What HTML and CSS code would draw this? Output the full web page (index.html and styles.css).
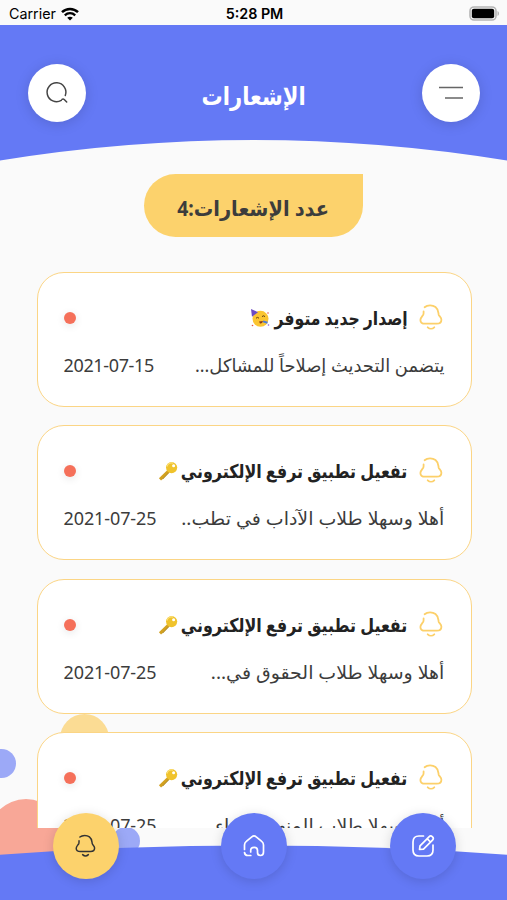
FILE: index.html
```html
<!DOCTYPE html>
<html lang="ar" dir="rtl">
<head>
    <meta charset="UTF-8">
    <meta name="viewport" content="width=device-width, initial-scale=1.0">
    <title>الإشعارات</title>
    <link rel="stylesheet" href="styles.css">
</head>
<body>

<svg class="sprite" aria-hidden="true">
    <symbol id="bell" viewBox="0 0 24 28">
        <path d="M5.6 3.2C8.500.7 13.500.7 16.500 3c3 2.300 2.700 5.200 3.200 7.700.4 1.600 2.700 2.500 2.700 5 0 2.700-2.100 4-4.600 4H6.200c-2.700 0-4.800-1.300-4.800-3.800 0-2.200 2.200-3.600 2.900-5.200.4-1 .3-2.100.3-3.200M8.700 23.300c1.900 1.800 4.700 1.800 6.600 0"/>
    </symbol>
    <symbol id="party" viewBox="0 0 20 20">
        <circle cx="10.5" cy="10.8" r="8" fill="#fbc531"/>
        <path d="M1 1l7 3.2-6 4.6z" fill="#6b4bc4"/>
        <path d="M6 10.2q1.5-1.6 3 0M12 8.6q1.5-1.6 3 0" fill="none" stroke="#5c3b12" stroke-width="1"/>
        <path d="M9 13.5l4-.6q-1 3.3-3 2.6z" fill="#8a3a1c"/>
        <path d="M13 13.4l4.5 1.4" stroke="#4d7bd8" stroke-width="2"/>
        <circle cx="2.5" cy="17.5" r=".8" fill="#e5534b"/>
        <circle cx="18" cy="5" r=".8" fill="#e5534b"/>
        <circle cx="18.5" cy="17" r=".8" fill="#8a5bd0"/>
    </symbol>
    <symbol id="key" viewBox="0 0 20 20">
        <path d="M10.5 10L2 18.4" stroke="#d3a11f" stroke-width="3"/>
        <path d="M4.500 18.200L11 11.500" stroke="#a98116" stroke-width="1"/>
        <circle cx="13.6" cy="6.6" r="5.6" fill="#f0c32c"/>
        <path d="M9 5.5a5 5 0 0 1 6-3.4" fill="none" stroke="#fbe07a" stroke-width="1.2"/>
        <circle cx="15.6" cy="4.8" r="1.5" fill="#fff"/>
    </symbol>
</svg>

<div class="screen">
    <div class="blob blob-yellow"></div>
    <div class="blob blob-blue"></div>
    <div class="blob blob-red"></div>
    <div class="blob blob-small"></div>

    <div class="status-bar" dir="ltr">
        <div class="carrier">
            <span>Carrier</span>
            <svg width="18" height="14" viewBox="0 0 18 14">
                <path d="M1 5.2C5.5.9 12.5.9 17 5.2" fill="none" stroke="#000" stroke-width="2.5"/>
                <path d="M3.8 8.3c3-2.8 7.400-2.8 10.400 0" fill="none" stroke="#000" stroke-width="2.3"/>
                <path d="M9 13.6L6.200 10.700c1.600-1.400 4-1.400 5.600 0z"/>
            </svg>
        </div>
        <div class="time">5:28 PM</div>
        <svg class="battery" width="31" height="15" viewBox="0 0 31 15">
            <rect x="1" y="1" width="26" height="13" rx="4" fill="#fafafa" stroke="#b5b5b5" stroke-width="1.6"/>
            <rect x="2.8" y="2.8" width="22.4" height="9.4" rx="2"/>
            <path d="M28.5 5c2 .7 2 4.300 0 5z" fill="#b5b5b5"/>
        </svg>
    </div>

    <header class="header">
        <svg class="header-bg" viewBox="0 0 507 136" preserveAspectRatio="none">
            <path d="M0 0H507V135.5Q253.5 94.5 0 135.5z"/>
        </svg>
        <button class="round-btn">
            <svg width="26" height="16" viewBox="0 0 26 16">
                <path d="M1 2.500h24M7 13h18" fill="none" stroke="#666" stroke-width="1.3"/>
            </svg>
        </button>
        <h1><span class="fit">الإشعارات</span></h1>
        <button class="round-btn">
            <svg width="24" height="24" viewBox="0 0 24 24">
                <path d="M16.300 19.300A9.400 9.400 0 1 1 20.300 14.500M17 18.300q1.200-.8 2.200.2l2.500 2.500" fill="none" stroke="#444" stroke-width="1.5" stroke-linecap="round"/>
            </svg>
        </button>
    </header>

    <div class="count"><span class="fit">عدد الإشعارات:4</span></div>

    <main class="list">
        <article class="card release">
            <div class="card-top">
                <svg class="bell"><use href="#bell"/></svg>
                <h2><span class="fit">إصدار جديد متوفر</span></h2>
                <svg class="emoji"><use href="#party"/></svg>
                <span class="dot"></span>
            </div>
            <div class="card-bottom">
                <p><span class="fit">يتضمن التحديث إصلاحاً للمشاكل...</span></p>
                <time dir="ltr">2021-07-15</time>
            </div>
        </article>
        <article class="card">
            <div class="card-top">
                <svg class="bell"><use href="#bell"/></svg>
                <h2><span class="fit">تفعيل تطبيق ترفع الإلكتروني</span></h2>
                <svg class="emoji"><use href="#key"/></svg>
                <span class="dot"></span>
            </div>
            <div class="card-bottom">
                <p><span class="fit">أهلا وسهلا طلاب الآداب في تطب..</span></p>
                <time dir="ltr">2021-07-25</time>
            </div>
        </article>
        <article class="card">
            <div class="card-top">
                <svg class="bell"><use href="#bell"/></svg>
                <h2><span class="fit">تفعيل تطبيق ترفع الإلكتروني</span></h2>
                <svg class="emoji"><use href="#key"/></svg>
                <span class="dot"></span>
            </div>
            <div class="card-bottom">
                <p><span class="fit">أهلا وسهلا طلاب الحقوق في...</span></p>
                <time dir="ltr">2021-07-25</time>
            </div>
        </article>
        <article class="card">
            <div class="card-top">
                <svg class="bell"><use href="#bell"/></svg>
                <h2><span class="fit">تفعيل تطبيق ترفع الإلكتروني</span></h2>
                <svg class="emoji"><use href="#key"/></svg>
                <span class="dot"></span>
            </div>
            <div class="card-bottom">
                <p><span class="fit">أهلا وسهلا طلاب المنهج الغراء</span></p>
                <time dir="ltr">2021-07-25</time>
            </div>
        </article>
    </main>

    <nav class="tabs">
        <svg class="tabs-bg" viewBox="0 0 507 55" preserveAspectRatio="none">
            <path d="M0 9.7Q253.5-8.7 507 9.7V55H0z"/>
        </svg>
        <button class="tab">
            <svg width="24" height="24" viewBox="0 0 24 24">
                <path d="M12.5 2H8C4 2 2 4 2 8v8c0 4 2 6 6 6h8c4 0 6-2 6-6v-5M8.5 15.5l.5-3.7L18 2.8c1.2-1.2 2.5-.9 3.5 0s1 2.2 0 3.4l-9 9zM16.3 4.8l3.2 3.2"/>
            </svg>
        </button>
        <button class="tab">
            <svg width="24" height="24" viewBox="0 0 24 24">
                <path d="M2.5 15.5V11c0-1.500.5-2.600 1.800-3.600l5.500-4.500c1.500-1.200 3-1.200 4.400 0l5.500 4.500c1.300 1 1.800 2.100 1.800 3.600v7c0 2.300-1.200 3.500-3 3.500s-3-1-3-3v-2c0-2-1.200-3.200-3.300-3.200s-3.500 1.200-3.500 3.200v1.500M2.500 18.500c.3 1.900 1.400 3 3.300 3h3"/>
            </svg>
        </button>
        <button class="tab active">
            <svg width="21" height="25" viewBox="0 0 24 28"><use href="#bell"/></svg>
        </button>
    </nav>
</div>

</body>
</html>
```
FILE: styles.css
```css
* {
    box-sizing: border-box;
}

body {
    margin: 0;
    font-family: 'Noto Sans', 'DejaVu Sans', sans-serif;
    color: #3c3c3c;
    background-color: #fafafa;
}

h1, h2, p {
    margin: 0;
}

button {
    border: none;
    padding: 0;
    cursor: pointer;
}

.sprite {
    display: none;
}

.screen {
    position: relative;
    display: flex;
    flex-direction: column;
    width: 507px;
    height: 900px;
    overflow: hidden;
}

.blob {
    position: absolute;
    border-radius: 50%;
}

.blob-yellow {
    left: 60px;
    top: 714px;
    width: 49px;
    height: 49px;
    background-color: #fbdc94;
}

.blob-blue {
    left: -13px;
    top: 749px;
    width: 29px;
    height: 29px;
    background-color: #9ca9f7;
}

.blob-red {
    left: -12px;
    top: 799px;
    width: 76px;
    height: 76px;
    background-color: #f8a797;
}

.blob-small {
    left: 112px;
    top: 827px;
    width: 28px;
    height: 28px;
    background-color: #9ca9f7;
}

/* status bar */
.status-bar {
    display: grid;
    grid-template-columns: 1fr auto 1fr;
    align-items: center;
    height: 25px;
    padding: 2px 7px 0 9px;
    font-family: Inter, sans-serif;
    font-size: 14.3px;
    color: #000;
}

.carrier {
    display: flex;
    align-items: center;
    gap: 5px;
}

.time {
    font-weight: 600;
}

.battery {
    justify-self: end;
}

/* header */
.header {
    position: relative;
    display: flex;
    justify-content: space-between;
    align-items: flex-start;
    height: 136px;
    padding: 39px 27px 0 28px;
}

.header-bg {
    position: absolute;
    inset: 0;
    width: 100%;
    height: 100%;
    fill: #6479f5;
}

.round-btn {
    position: relative;
    display: flex;
    justify-content: center;
    align-items: center;
    width: 58px;
    height: 58px;
    border-radius: 50%;
    background-color: #fff;
    box-shadow: 0 2px 14px rgba(0, 0, 0, 0.14);
}

.header h1 {
    position: relative;
    padding-top: 2px;
    line-height: 58px;
    font-size: 25px;
    color: #fff;
}

.fit {
    display: inline-block;
    white-space: nowrap;
    transform: scaleX(var(--fit));
}

h1 {
    --fit: 0.845;
}

.count {
    --fit: 0.925;
    align-self: center;
    width: 219px;
    height: 63px;
    margin-top: 13px;
    border-radius: 32px 0 32px 32px;
    background-color: #fcd26c;
    font-size: 21px;
    font-weight: bold;
    line-height: 69px;
    text-align: center;
}

/* notifications */
.list {
    position: relative;
    display: flex;
    flex-direction: column;
    gap: 18.4px;
    height: 591px;
    padding: 35px 35.5px 0 36.5px;
    overflow: hidden;
}

.card {
    flex: none;
    height: 135px;
    padding: 28px 26px 0;
    border: 1.5px solid #fbd585;
    border-radius: 27px;
    background-color: #fff;
}

.card-top {
    display: flex;
    align-items: center;
    height: 34px;
}

.bell {
    width: 24px;
    height: 28px;
    margin-right: 2px;
    fill: none;
    stroke: #fcd06a;
    stroke-width: 1.8;
    stroke-linecap: round;
}

.card h2 {
    --fit: 0.838;
    width: 226px;
    margin-right: 11px;
    font-size: 19px;
    line-height: 36px;
    color: #222;
}

.card.release h2 {
    --fit: 0.823;
    width: 134px;
}

.card .fit {
    transform-origin: right center;
}

.card p {
    --fit: 1.055;
}

.card.release p {
    --fit: 0.992;
}

.emoji {
    width: 20px;
    height: 20px;
    margin-right: 4px;
}

.dot {
    width: 12px;
    height: 12px;
    margin-right: auto;
    border-radius: 50%;
    background-color: #f5705a;
    box-shadow: 0 2px 8px rgba(0, 0, 0, 0.1);
}

.card-bottom {
    display: flex;
    justify-content: space-between;
    align-items: center;
    height: 34px;
    margin-top: 13px;
    font-size: 18px;
}

.card-bottom time {
    letter-spacing: -0.1px;
}

.release .card-bottom time {
    letter-spacing: -0.35px;
}

/* bottom tabs */
.tabs {
    position: relative;
    display: flex;
    justify-content: space-between;
    height: 55px;
    margin-top: auto;
    padding: 0 51.5px 0 52.5px;
}

.tabs-bg {
    position: absolute;
    inset: 0;
    width: 100%;
    height: 100%;
    fill: #6479f5;
}

.tab {
    position: relative;
    display: flex;
    justify-content: center;
    align-items: center;
    width: 66px;
    height: 66px;
    margin-top: -32px;
    border-radius: 50%;
    background-color: #6479f5;
    box-shadow: 0 2px 12px rgba(0, 0, 0, 0.14);
}

.tab svg {
    fill: none;
    stroke: #fff;
    stroke-width: 1.7;
    stroke-linecap: round;
    stroke-linejoin: round;
}

.tab.active {
    background-color: #fcd26c;
}

.tab.active svg {
    stroke: #333;
}
```
